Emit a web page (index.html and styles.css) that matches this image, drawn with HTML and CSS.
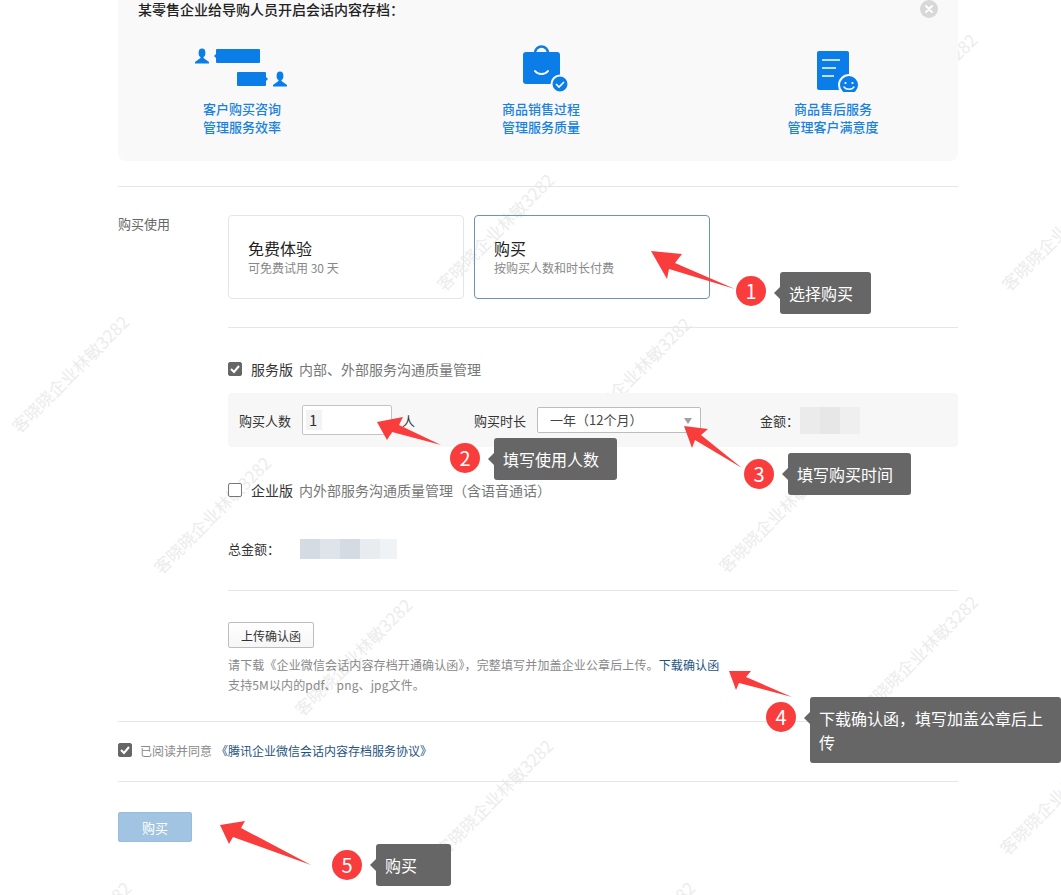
FILE: index.html
```html
<!DOCTYPE html>
<html lang="zh-CN">
<head>
  <meta charset="UTF-8">
  <title>会话内容存档</title>
  <link rel="stylesheet" href="styles.css">
</head>
<body>
  <!-- watermark sits behind the form -->
  <div class="wm-layer">
    <span class="wm wm-1">客晓晓企业林敏3282</span>
    <span class="wm wm-2">客晓晓企业林敏3282</span>
    <span class="wm wm-3">客晓晓企业林敏3282</span>
    <span class="wm wm-4">客晓晓企业林敏3282</span>
    <span class="wm wm-5">客晓晓企业林敏3282</span>
    <span class="wm wm-6">客晓晓企业林敏3282</span>
    <span class="wm wm-7">客晓晓企业林敏3282</span>
    <span class="wm wm-8">客晓晓企业林敏3282</span>
    <span class="wm wm-9">客晓晓企业林敏3282</span>
    <span class="wm wm-10">客晓晓企业林敏3282</span>
    <span class="wm wm-11">客晓晓企业林敏3282</span>
    <span class="wm wm-12">客晓晓企业林敏3282</span>
    <span class="wm wm-13">客晓晓企业林敏3282</span>
  </div>

  <div class="page">
    <div class="intro">
      <div class="intro-title">某零售企业给导购人员开启会话内容存档：</div>
      <span class="intro-close">
        <svg width="10" height="10" viewBox="0 0 10 10"><path d="M2 2l6 6M8 2l-6 6" stroke="#fff" stroke-width="2" stroke-linecap="round"/></svg>
      </span>
      <div class="intro-grid">
        <div class="intro-item">
          <svg class="intro-icon" width="100" height="50" viewBox="0 0 100 50">
            <g fill="#0a7de8">
              <ellipse cx="10" cy="11" rx="3.400" ry="4.400"/>
              <path d="M8.500 14v2L3 20v1.500h14V20l-5.500-4v-2z"/>
              <rect x="24" y="7" width="44" height="14" rx="1"/>
              <path d="M24 12l-2 2 2 2z"/>
              <rect x="45" y="30" width="29" height="14" rx="1"/>
              <path d="M74 35l2 2-2 2z"/>
              <ellipse cx="88" cy="34" rx="3.400" ry="4.400"/>
              <path d="M86.500 37v2L81 43v1.500h14V43l-5.500-4v-2z"/>
            </g>
          </svg>
          <div>客户购买咨询<br>管理服务效率</div>
        </div>
        <div class="intro-item">
          <svg class="intro-icon" width="100" height="50" viewBox="0 0 100 50">
            <path d="M44 11V8a6.500 6.500 0 0 1 13 0v3" transform="translate(0 3)" fill="none" stroke="#0a7de8" stroke-width="2.500"/>
            <rect x="32" y="10" width="37" height="32" rx="3" fill="#0a7de8"/>
            <path d="M44 29c3 4 10 4 13 0" fill="none" stroke="#fff" stroke-width="2" stroke-linecap="round"/>
            <circle cx="69" cy="42" r="8.500" fill="#0a7de8" stroke="#f9f9fa" stroke-width="2"/>
            <path d="M65 42l3 3 5-5" fill="none" stroke="#fff" stroke-width="1.600"/>
          </svg>
          <div>商品销售过程<br>管理服务质量</div>
        </div>
        <div class="intro-item">
          <svg class="intro-icon" width="100" height="50" viewBox="0 0 100 50">
            <rect x="34" y="9" width="32" height="39" rx="2" fill="#0a7de8"/>
            <path d="M39 18h18M39 26h14M39 34h12" stroke="#fff" stroke-width="1.600"/>
            <circle cx="66" cy="43" r="10" fill="#0a7de8" stroke="#f9f9fa" stroke-width="2"/>
            <circle cx="62.500" cy="41" r="1.100" fill="#fff"/>
            <circle cx="69.500" cy="41" r="1.100" fill="#fff"/>
            <path d="M61 45c2 3 8 3 10 0" fill="none" stroke="#fff" stroke-width="1.400" stroke-linecap="round"/>
          </svg>
          <div>商品售后服务<br>管理客户满意度</div>
        </div>
      </div>
    </div>

    <hr class="line line-first">

    <div class="buy">
      <div class="buy-label">购买使用</div>
      <div class="buy-main">
        <div class="cards">
          <div class="card">
            <div class="card-title">免费体验</div>
            <div class="card-sub">可免费试用 30 天</div>
          </div>
          <div class="card card-on">
            <div class="card-title">购买</div>
            <div class="card-sub">按购买人数和时长付费</div>
          </div>
        </div>

        <hr class="line line-cards">

        <div class="plan">
          <span class="check check-on"><svg width="10" height="10" viewBox="0 0 10 10"><path d="M1 5l3 3 5-6" fill="none" stroke="#fff" stroke-width="2"/></svg></span>
          <span class="plan-name">服务版</span>
          <span class="plan-desc">内部、外部服务沟通质量管理</span>
        </div>

        <div class="order">
          <span class="order-people">购买人数</span>
          <span class="num-input"><span class="num-value">1</span></span>
          <span class="order-unit">人</span>
          <span class="order-time">购买时长</span>
          <span class="fake-select">一年（12个月）<i class="select-arrow"></i></span>
          <span class="order-fee">金额：</span>
          <span class="blur blur-fee"><i></i><i></i><i></i></span>
        </div>

        <div class="plan plan-second">
          <span class="check"></span>
          <span class="plan-name">企业版</span>
          <span class="plan-desc">内外部服务沟通质量管理（含语音通话）</span>
        </div>

        <div class="total">
          <span class="total-label">总金额：</span>
          <span class="blur blur-total"><i></i><i></i><i></i><i></i><i></i></span>
        </div>

        <hr class="line line-total">

        <button class="upload-btn">上传确认函</button>
        <p class="hint">请下载《企业微信会话内容存档开通确认函》，完整填写并加盖企业公章后上传。<a class="link">下载确认函</a><br>支持5M以内的pdf、png、jpg文件。</p>
      </div>
    </div>

    <hr class="line line-upload">

    <div class="agree">
      <span class="check check-on"><svg width="10" height="10" viewBox="0 0 10 10"><path d="M1 5l3 3 5-6" fill="none" stroke="#fff" stroke-width="2"/></svg></span>
      <span class="agree-text">已阅读并同意</span>
      <a class="link">《腾讯企业微信会话内容存档服务协议》</a>
    </div>

    <hr class="line line-agree">

    <button class="buy-btn">购买</button>
  </div>

  <!-- tutorial marks drawn on top of the screenshot -->
  <svg class="arrows" width="1061" height="895" viewBox="0 0 1061 895">
    <g fill="#f93d3d">
      <path d="M651 251l31 3-7 9 60 26-66-20-2 10z"/>
      <path d="M377 422l26-5-4 8 42 20-49-13-5 8z"/>
      <path d="M684 426l24 3-7 6 41 33-47-28-3 8z"/>
      <path d="M729 671l22 0-5 6 46 20-53-14-3 7z"/>
      <path d="M220 825l25-4-4 7 70 37-78-28-4 7z"/>
    </g>
  </svg>

  <span class="step step-1">1</span>
  <span class="step step-2">2</span>
  <span class="step step-3">3</span>
  <span class="step step-4">4</span>
  <span class="step step-5">5</span>

  <div class="tip tip-1">选择购买</div>
  <div class="tip tip-2">填写使用人数</div>
  <div class="tip tip-3">填写购买时间</div>
  <div class="tip tip-4">下载确认函，填写加盖公章后上传</div>
  <div class="tip tip-5">购买</div>
</body>
</html>
```

FILE: styles.css
```css
* { box-sizing: border-box; }
html, body { margin: 0; padding: 0; width: 100%; height: 100%; overflow: hidden; background: #fff; }
body { position: relative; font-family: "Noto Sans CJK SC", "Liberation Sans", sans-serif; font-size: 13px; color: #333; }

/* watermark */
.wm-layer { position: absolute; inset: 0; overflow: hidden; }
.wm { position: absolute; white-space: nowrap; font-size: 17px; line-height: 20px; color: #ececec; transform: translate(-50%, -50%) rotate(-45deg); }
.wm-1 { left: 495px; top: 232px; }
.wm-2 { left: 632px; top: 376px; }
.wm-3 { left: 777px; top: 514px; }
.wm-4 { left: 919px; top: 654px; }
.wm-5 { left: 1058px; top: 796px; }
.wm-6 { left: 70px; top: 374px; }
.wm-7 { left: 212px; top: 515px; }
.wm-8 { left: 353px; top: 657px; }
.wm-9 { left: 494px; top: 798px; }
.wm-10 { left: 1060px; top: 232px; }
.wm-11 { left: 918px; top: 92px; }
.wm-12 { left: 636px; top: 940px; }
.wm-13 { left: 72px; top: 940px; }

.page { position: relative; width: 840px; margin-left: 118px; }
.line { height: 1px; margin: 0; border: 0; background: #e6e6e6; }
.line-first { margin-top: 25px; }
.line-cards { margin-top: 28px; }
.line-total { margin-top: 32px; }
.line-upload { margin-top: 26px; }
.line-agree { margin-top: 21px; }

/* intro panel */
.intro { position: relative; height: 161px; background: #f9f9fa; border-radius: 0 0 8px 8px; }
.intro-title { padding-left: 20px; font-size: 14px; font-weight: 500; line-height: 18px; color: #222; }
.intro-close { position: absolute; right: 20px; top: 0; width: 18px; height: 18px; border-radius: 50%; background: #d8d8d8; display: flex; align-items: center; justify-content: center; }
.intro-grid { display: grid; grid-template-columns: 248px 350px 234px; margin-top: 24px; }
.intro-item { text-align: center; font-size: 13px; font-weight: 500; line-height: 18px; color: #1a82dc; }
.intro-icon { display: block; margin: 0 auto 8px; }

/* buy section */
.buy { display: flex; padding-top: 28px; }
.buy-label { width: 110px; flex: none; margin-top: -1px; line-height: 20px; color: #666; }
.buy-main { flex: 1; min-width: 0; }
.cards { display: flex; gap: 10px; }
.card { width: 236px; height: 84px; padding: 21px 19px 0; background: transparent; border: 1px solid #e3e5e8; border-radius: 4px; }
.card-on { border-color: #6a95b4; }
.card-title { font-size: 16px; line-height: 22px; color: #222; }
.card-sub { font-size: 12px; line-height: 18px; color: #888; }

.plan { display: flex; align-items: center; height: 20px; margin-top: 31px; }
.plan-second { margin-top: 33px; }
.plan-name { margin-left: 9px; font-size: 14px; color: #333; }
.plan-desc { margin-left: 6px; font-size: 14px; color: #777; }
.check { display: inline-flex; align-items: center; justify-content: center; width: 14px; height: 14px; flex: none; border: 1px solid #777; border-radius: 2px; background: #fff; }
.check-on { background: #666; border-color: #666; }

.order { display: flex; align-items: center; height: 54px; margin-top: 14px; padding-left: 11px; background: #f7f7f7; border-radius: 4px; }
.order-people { width: 63px; flex: none; }
.num-input { display: flex; align-items: center; width: 90px; height: 30px; padding-left: 3px; flex: none; background: #fff; border: 1px solid #c4c4c4; border-radius: 2px; }
.num-value { width: 16px; padding-left: 3px; font-size: 15px; line-height: 20px; background: #f3f3f3; color: #333; }
.order-unit { width: 82px; padding-left: 10px; flex: none; }
.order-time { width: 63px; flex: none; }
.fake-select { position: relative; width: 164px; height: 26px; padding-left: 12px; flex: none; font-size: 13px; line-height: 24px; background: #fff; border: 1px solid #bdbdbd; border-radius: 2px; color: #444; }
.select-arrow { position: absolute; right: 8px; top: 10px; border: 4px solid transparent; border-top: 6px solid #a0a0a0; border-bottom: 0; }
.order-fee { margin-left: 59px; width: 40px; flex: none; }

.blur { display: flex; }
.blur i { display: block; width: 20px; height: 27px; }
.blur-fee i:nth-child(1) { background: #ebebeb; }
.blur-fee i:nth-child(2) { background: #e7e7e7; }
.blur-fee i:nth-child(3) { background: #efefef; }
.blur-total { margin-top: 2px; }
.blur-total i { height: 20px; }
.blur-total i:nth-child(1) { background: #d5dbe3; }
.blur-total i:nth-child(2) { background: #dfe4ea; }
.blur-total i:nth-child(3) { background: #d5dbe3; }
.blur-total i:nth-child(4) { background: #e8ecf0; }
.blur-total i:nth-child(5) { width: 17px; background: #f0f3f6; }

.total { display: flex; align-items: center; height: 20px; margin-top: 38px; }
.total-label { width: 72px; flex: none; }

.upload-btn { display: block; width: 86px; height: 26px; margin: 31px 0 0; padding: 0; font: inherit; font-size: 12px; color: #333; background: linear-gradient(#fff, #f6f6f6); border: 1px solid #bdbdbd; border-radius: 2px; }
.hint { margin: 7px 0 0; font-size: 12px; letter-spacing: .13px; line-height: 20px; color: #888; }
.link { color: #1d5380; }

.agree { display: flex; align-items: center; height: 20px; margin-top: 18px; font-size: 12px; }
.agree-text { margin-left: 8px; color: #888; }
.agree .link { margin-left: 4px; }

.buy-btn { display: block; width: 74px; height: 30px; margin: 30px 0 0; padding: 0; font: inherit; color: #fff; background: #a0c4e2; border: 1px solid #97bcdc; border-radius: 2px; }

/* tutorial marks */
.arrows { position: absolute; left: 0; top: 0; }
.step { position: absolute; display: flex; align-items: center; justify-content: center; width: 30px; height: 30px; border-radius: 50%; background: #f93d3d; color: #fff; font-size: 20px; line-height: 30px; }
.step-1 { left: 736px; top: 276px; }
.step-2 { left: 450px; top: 443px; }
.step-3 { left: 744px; top: 459px; }
.step-4 { left: 766px; top: 702px; }
.step-5 { left: 332px; top: 850px; }

.tip { position: absolute; padding: 0 9px; font-size: 16px; line-height: 42px; color: #fff; background: #666; border-radius: 3px; }
.tip::before { content: ""; position: absolute; left: -6px; top: 15px; border: 6px solid transparent; border-left: 0; border-right-color: #666; }
.tip-1 { left: 780px; top: 272px; width: 91px; height: 42px; }
.tip-2 { left: 494px; top: 438px; width: 123px; height: 42px; }
.tip-3 { left: 788px; top: 453px; width: 123px; height: 42px; }
.tip-4 { left: 810px; top: 697px; width: 251px; height: 66px; padding-top: 9px; line-height: 24px; }
.tip-5 { left: 376px; top: 844px; width: 75px; height: 42px; }
```
